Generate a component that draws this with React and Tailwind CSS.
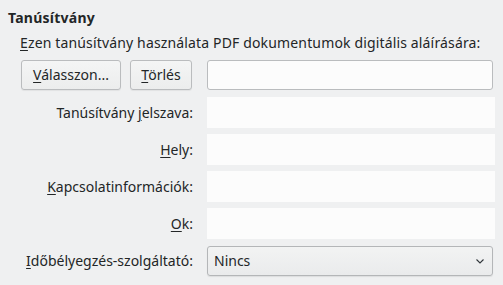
import React from "react";

const U = ({ children }) => <span className="underline underline-offset-2 decoration-1">{children}</span>;

function Field() {
  return <div className="h-[31px] w-[288px] bg-[#fcfcfc]" />;
}

function Row({ label, children }) {
  return (
    <div className="flex items-center h-[31px]">
      <div className="w-[173px] text-right pr-0">{label}</div>
      <div className="ml-[14px]">{children}</div>
    </div>
  );
}

export default function App() {
  return (
    <div
      className="w-[503px] h-[285px] bg-[#eff0f1] text-[#232627] text-[14px] leading-[18px] overflow-hidden"
      style={{ fontFamily: '"Noto Sans", sans-serif' }}
    >
      <div className="pl-[8px] pt-[9px] font-bold tracking-[0.25px]">Tanúsítvány</div>
      <div className="pl-[20px] mt-[7px]">
        <div className="tracking-[0.15px]">
          <U>E</U>zen tanúsítvány használata PDF dokumentumok digitális aláírására:
        </div>
        <div className="flex items-center mt-[8px] h-[30px]">
          <div className="w-[173px] flex gap-[9px] pl-[1px]">
            <div className="w-[100px] h-[30px] rounded-[3px] border border-[#babcbe] bg-gradient-to-b from-[#f4f5f5] to-[#eceded] shadow-[0_1px_1px_rgba(0,0,0,0.06)] flex items-center justify-center">
              <span><U>V</U>álasszon...</span>
            </div>
            <div className="w-[62px] h-[30px] rounded-[3px] border border-[#babcbe] bg-gradient-to-b from-[#f4f5f5] to-[#eceded] shadow-[0_1px_1px_rgba(0,0,0,0.06)] flex items-center justify-center">
              <span><U>T</U>örlés</span>
            </div>
          </div>
          <div className="ml-[14px] w-[286px] h-[30px] rounded-[3px] border border-[#babcbe] bg-[#fcfcfc]" />
        </div>
        <div className="flex flex-col gap-[6px] mt-[7px]">
          <Row label={<span>Tanúsítvány <U>j</U>elszava:</span>}><Field /></Row>
          <Row label={<span><U>H</U>ely:</span>}><Field /></Row>
          <Row label={<span><U>K</U>apcsolatinformációk:</span>}><Field /></Row>
          <Row label={<span><U>O</U>k:</span>}><Field /></Row>
          <Row label={<span><U>I</U>dőbélyegzés-szolgáltató:</span>}>
            <div className="w-[286px] h-[30px] rounded-[3px] border border-[#b4b6b8] bg-gradient-to-b from-[#f2f3f3] to-[#eaebec] shadow-[0_1px_1px_rgba(0,0,0,0.08)] flex items-center justify-between pl-[6px] pr-[6px]">
              <span>Nincs</span>
              <svg width="12" height="12" viewBox="0 0 12 12" fill="none">
                <path d="M2.5 4.5 L6 8 L9.5 4.5" stroke="#31363b" strokeWidth="1.1" />
              </svg>
            </div>
          </Row>
        </div>
      </div>
    </div>
  );
}
